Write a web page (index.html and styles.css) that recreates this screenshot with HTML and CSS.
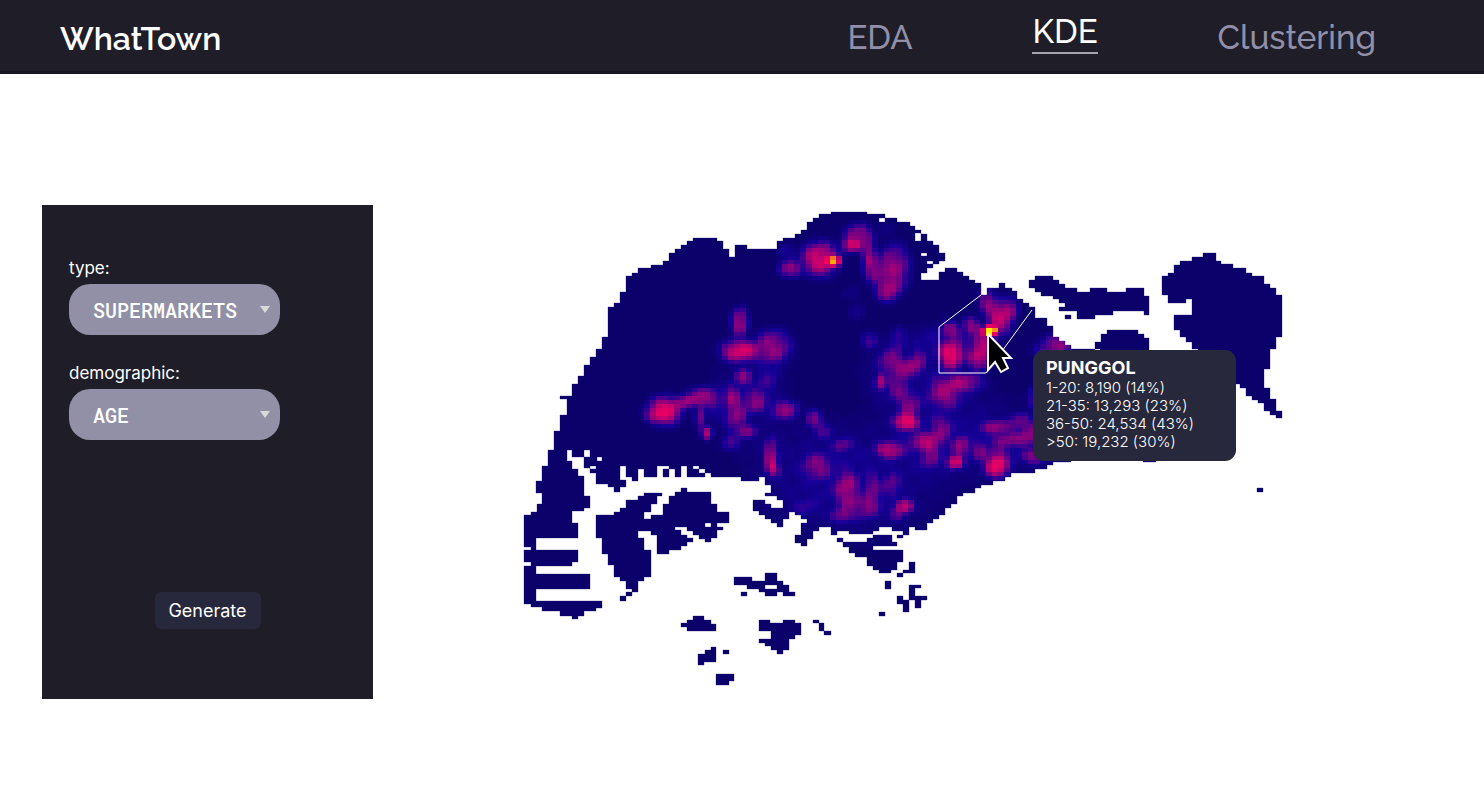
FILE: index.html
```html
<!DOCTYPE html>
<html lang="en">
<head>
<meta charset="utf-8">
<title>WhatTown</title>
<link rel="stylesheet" href="styles.css">
</head>
<body>
<header class="topbar">
  <a class="brand" href="#">WhatTown</a>
  <nav class="nav">
    <a class="nav-link" href="#">EDA</a>
    <a class="nav-link active" href="#" aria-current="page">KDE</a>
    <a class="nav-link" href="#">Clustering</a>
  </nav>
</header>
<main class="page">
  <form class="panel">
    <div class="field">
      <label for="type">type:</label>
      <div class="select-wrap">
        <select id="type"><option>SUPERMARKETS</option></select>
        <svg class="caret" viewBox="0 0 10 7" aria-hidden="true"><path d="M0 0H10L5 7Z"/></svg>
      </div>
    </div>
    <div class="field">
      <label for="demographic">demographic:</label>
      <div class="select-wrap">
        <select id="demographic"><option>AGE</option></select>
        <svg class="caret" viewBox="0 0 10 7" aria-hidden="true"><path d="M0 0H10L5 7Z"/></svg>
      </div>
    </div>
    <button class="generate" type="button">Generate</button>
  </form>
  <figure class="map">
    <svg class="map-svg" viewBox="523 211 760 476" role="img" aria-label="Density map">
      <defs>
        <clipPath id="land-clip"><path id="land" clip-rule="evenodd" fill-rule="evenodd" d="
M560 415H567V399H560V396H572V384H578V376H584V365H590V357H596V349H602V337H608V307H614V303H620V292H626V276H632V273H638V268H651V265H663V261H669V253H675V249H681V245H687V241H693V238H717V241H723V249H729V257H735V245H747V249H777V241H783V238H795V234H801V230H807V222H813V218H819V214H831V212H867V214H885V218H897V222H910V226H915V230H921V234H927V241H933V245H939V253H945V261H939V264H933V268H927V273H921V280H939V272H945V268H957V272H963V276H969V280H975V283H981V295H987V288H999V283H1005V288H1012V291H1017V299H1023V303H1029V307H1035V318H1047V326H1053V337H1059V341H1065V345H1071V349H1100V460H1071V462H1053V465H1047V469H1035V473H1011V477H1005V481H993V485H981V488H975V493H963V496H957V504H951V508H945V515H939V519H933V523H927V530H915V527H909V535H903V538H897V535H903V531H892V527H879V531H873V534H849V531H837V535H831V527H819V531H813V539H807V546H801V543H795V535H801V523H807V519H801V515H795V512H789V519H783V527H777V523H771V519H765V515H759V511H753V500H765V504H771V508H783V500H777V496H765V493H771V485H765V477H759V481H741V477H711V473H705V477H687V466H681V477H675V469H669V477H663V469H669V466H657V477H644V469H638V481H632V477H626V466H620V480H626V487H620V492H614V487H608V484H596V473H590V468H584V457H572V450H567V461H572V469H578V476H584V496H590V508H584V511H572V523H578V538H536V550H578V562H572V566H536V574H590V589H536V601H602V608H596V611H584V616H578V619H572V616H560V611H542V607H531V604H524V566H531V562H524V550H531V547H524V515H531V512H537V504H542V493H536V481H542V466H548V450H554V431H560Z
M584 450H590V457H584ZM597 457H602V461H597ZM590 466H596V469H590ZM693 466H699V469H693ZM699 469H705V473H699ZM879 218H885V222H879ZM915 233H921V241H915ZM921 253H927V256H921ZM927 261H933V264H927Z
M596 515H614V512H620V508H626V500H638V496H644V493H662V496H657V504H651V512H644V519H651V515H663V504H669V496H675V492H681V488H687V492H711V504H717V512H729V523H717V527H723V530H717V538H711V542H705V539H699V535H693V531H687V527H675V530H681V535H687V538H693V542H687V546H681V550H669V554H657V535H651V531H638V538H644V550H651V577H644V581H638V592H632V596H626V601H620V596H626V592H632V589H626V581H620V577H614V565H608V554H602V538H596ZM705 523H711V527H705Z
M734 577H752V581H765V573H777V581H783V585H789V592H795V596H783V592H777V596H765V592H759V589H747V585H734ZM765 585H777V589H765ZM741 592H747V596H741Z
M693 616H704V620H711V624H716V631H687V627H681V623H687V620H693Z
M759 620H770V623H783V620H795V623H801V635H795V639H789V650H783V654H777V650H771V646H765V643H759V639H771V631H759Z
M813 620H819V623H813ZM819 623H824V631H819ZM824 631H831V635H824Z
M711 647H716V662H704V665H698V654H705V650H711ZM723 650H729V654H723Z
M716 674H734V681H729V685H716Z
M837 538H843V542H837ZM843 542H867V538H873V535H892V542H897V546H873V550H903V562H897V570H891V573H879V570H873V566H867V557H855V553H849V547H843Z
M909 562H915V573H903V570H909ZM897 573H903V577H897ZM885 581H891V589H885ZM909 585H921V588H915V596H927V600H921V608H915V600H909ZM897 596H903V600H909V612H903V604H897ZM879 612H885V616H879Z
M1029 280H1035V276H1053V280H1059V284H1065V288H1077V292H1090V288H1107V292H1126V288H1144V296H1149V315H1144V311H1113V315H1095V319H1077V311H1059V307H1065V303H1059V299H1053V296H1041V292H1035V288H1029ZM1065 315H1071V319H1065Z
M1101 351H1095V342H1101V334H1107V330H1138V334H1144V338H1149V351H1156V462H1143V400H1101Z
M1162 276H1168V273H1174V265H1180V261H1192V257H1203V253H1216V261H1221V264H1233V268H1246V273H1252V276H1264V284H1270V288H1276V295H1282V337H1276V349H1270V369H1264V388H1270V399H1276V411H1282V418H1276V415H1270V411H1264V403H1258V400H1252V396H1246V388H1240V384H1230V353H1198V349H1192V342H1186V337H1180V330H1174V315H1192V299H1186V303H1168V295H1162Z
M1257 488H1263V492H1257Z"/></clipPath>
      </defs>
      <use class="land" href="#land"/>
      <g id="heat" clip-path="url(#land-clip)" shape-rendering="crispEdges"></g>
      <path class="area" d="M981 295L939 327V373H986L1032 310"/>
      <path class="pointer" d="M988 334V370L995 362L1001 372L1008 368L1003 358H1011Z"/>
    </svg>
    <figcaption class="tooltip">
      <strong class="tooltip-title">PUNGGOL</strong>
      <span>1-20: 8,190 (14%)</span>
      <span>21-35: 13,293 (23%)</span>
      <span>36-50: 24,534 (43%)</span>
      <span>&gt;50: 19,232 (30%)</span>
    </figcaption>
  </figure>
</main>
<script src="heat.js"></script>
</body>
</html>
```
FILE: styles.css
```css
* { box-sizing: border-box; }

body {
  margin: 0;
  background: #fff;
  font-family: Inter, "Liberation Sans", sans-serif;
}

.topbar {
  display: flex;
  justify-content: space-between;
  height: 74px;
  padding: 0 108px 0 60px;
  background: #1e1d28;
  border-bottom: 3px solid #191822;
}

.brand,
.nav-link {
  font-family: Raleway, Lato, sans-serif;
  font-size: 32px;
  font-weight: 500;
  line-height: 40px;
  text-decoration: none;
  color: #9190a8;
}

.brand { padding-top: 19px; color: #fff; font-weight: 600; }

.nav {
  display: flex;
  align-items: flex-start;
  gap: 120px;
}

.nav-link {
  margin-top: 18px;
  font-size: 33px;
}

.nav-link.active {
  margin-top: 12px;
  color: #fff;
  border-bottom: 2px solid #a5a5ad;
}

.page {
  display: flex;
  align-items: flex-start;
  gap: 150px;
  padding: 131px 201px 0 42px;
}

.panel {
  display: flex;
  flex: none;
  flex-direction: column;
  width: 331px;
  min-height: 494px;
  padding: 51px 27px 70px;
  background: #1e1d28;
  color: #fff;
  font-size: 17px;
}

.field {
  display: flex;
  flex-direction: column;
  gap: 3px;
  margin-bottom: 26px;
  font-weight: 400;
  line-height: 25px;
}

.select-wrap {
  display: grid;
  align-items: center;
  width: 211px;
}

.select-wrap select {
  grid-area: 1 / 1;
  appearance: none;
  width: 100%;
  height: 51px;
  padding: 0 24px;
  border: 0;
  border-radius: 21px;
  background: #9190a6;
  color: #fff;
  font-family: "Roboto Mono", "DejaVu Sans Mono", monospace;
  font-size: 20px;
  font-weight: 500;
}

.caret {
  grid-area: 1 / 1;
  justify-self: end;
  width: 10px;
  height: 7px;
  margin-right: 10px;
  fill: #d9d9d9;
  pointer-events: none;
}

.generate {
  align-self: center;
  width: 106px;
  height: 37px;
  margin-top: auto;
  padding: 0;
  border: 0;
  border-radius: 6px;
  background: #28283c;
  color: #fff;
  font-family: inherit;
  font-size: 18px;
}

.map {
  position: relative;
  flex: 1;
  margin: 0;
}

.map-svg {
  display: block;
  width: 100%;
  margin-top: 6px;
}

.land {
  fill: #0c006b;
  stroke: #0c006b;
  stroke-opacity: 0.3;
}

.area {
  fill: none;
  stroke: #fff;
}

.pointer {
  fill: #000;
  stroke: #fff;
  stroke-width: 2;
}

.tooltip {
  position: absolute;
  left: 67.1%;
  top: 30%;
  display: flex;
  flex-direction: column;
  width: 203px;
  padding: 7px 13px 10px;
  border-radius: 11px;
  background: #28283c;
  color: #fff;
  font-size: 15px;
  font-weight: 300;
  line-height: 18px;
  white-space: nowrap;
}

.tooltip-title {
  font-size: 18px;
  font-weight: 700;
  line-height: 22px;
}
```
FILE: heat.js
```js
// Density hotspots: x, y, horizontal radius, vertical radius, strength
const spots = [
  [820,259,13,12,.66],[834,261,5,4,.75],[790,269,8,6,.45],[787,252,7,6,.13],
  [859,237,10,9,.5],[850,246,7,5,.4],[869,254,5,7,.45],[873,270,7,9,.4],[894,268,11,16,.48],[887,291,9,8,.4],
  [886,228,7,5,.06],[852,293,7,6,.06],[857,312,6,6,.1],
  [987,301,6,11,.35],[1001,317,9,12,.62],[990,331,5,4,1.2],[984,345,9,12,.45],[971,325,6,6,.4],[951,330,7,6,.35],
  [951,355,9,10,.6],[978,361,8,7,.35],[1013,307,5,8,.2],[967,345,16,13,.15],
  [773,347,13,12,.45],[740,322,6,10,.5],[740,351,13,8,.65],[744,377,6,6,.38],
  [665,411,12,10,.72],[652,415,6,5,.15],[702,397,12,7,.42],[686,402,9,5,.28],[701,417,4,9,.35],[707,433,4,5,.5],
  [732,393,5,8,.28],[736,413,8,14,.36],[756,402,8,8,.34],[747,432,7,5,.3],[731,443,7,6,.2],[716,404,7,12,.12],
  [763,388,9,8,.12],[770,375,8,8,.12],[785,410,10,7,.4],[814,419,6,7,.32],[823,431,7,6,.18],
  [771,456,5,12,.45],[774,470,5,5,.3],[817,466,10,9,.3],[843,445,7,5,.24],
  [847,489,8,12,.38],[862,508,13,8,.28],[873,491,6,12,.27],[892,485,6,9,.24],[905,506,6,5,.6],[896,514,6,5,.24],
  [841,516,7,5,.3],[805,507,9,6,.12],[890,450,10,6,.48],[906,422,9,6,.65],[910,405,8,9,.34],[927,441,13,7,.4],
  [942,427,8,8,.26],[930,457,7,9,.26],[955,462,6,5,.6],[961,446,6,8,.36],[997,467,9,8,.66],[999,454,6,6,.22],
  [980,452,7,7,.24],[998,427,13,5,.34],[1022,420,7,5,.34],[1015,440,16,5,.28],[1031,432,6,6,.32],[1033,457,8,5,.3],
  [1034,398,5,8,.25],[1057,345,11,7,.45],[1040,352,7,5,.15],
  [870,340,6,6,.24],[899,340,5,9,.22],[890,360,7,9,.28],[906,368,9,8,.34],[918,362,6,9,.3],[881,382,4,6,.4],
  [899,387,7,9,.26],[967,382,12,7,.4],[945,392,12,11,.38],[927,340,14,10,.1],[889,376,12,20,.08],
  [811,475,42,36,.09],[875,482,46,40,.09],[955,434,46,34,.11],[895,375,26,28,.06],[1030,445,34,16,.12],
  [750,400,28,36,.07],[943,365,14,32,.08]
];

const scale = [
  [0, 12, 0, 107], [.16, 22, 0, 153], [.28, 70, 0, 142], [.46, 135, 0, 126],
  [.72, 224, 0, 101], [.92, 255, 0, 90], [1.08, 255, 130, 25], [1.3, 255, 235, 0]
];

function colour(v) {
  let i = 1;
  while (i < scale.length - 1 && v > scale[i][0]) i++;
  const a = scale[i - 1];
  const b = scale[i];
  const t = Math.min(1, (v - a[0]) / (b[0] - a[0]));
  return "rgb(" + [1, 2, 3].map(k => Math.round(a[k] + (b[k] - a[k]) * t)).join(",") + ")";
}

const heat = document.getElementById("heat");
const cellWidth = 6;
const cellHeight = 4;

for (let y = 212; y < 600; y += cellHeight) {
  for (let x = 524; x < 1090; x += cellWidth) {
    let v = 0;
    for (const [sx, sy, rx, ry, power] of spots) {
      const d = ((x + 3 - sx) / rx) ** 2 + ((y + 2 - sy) / ry) ** 2;
      v += power * Math.exp(-0.38 * d * Math.sqrt(d + 0.1));
    }
    const wave = Math.sin(x * 0.21 + y * 0.07) * Math.sin(y * 0.23 - x * 0.05);
    v *= 1 + 0.3 * wave * Math.max(0, 1 - v);
    if (v < 0.015) continue;
    const cell = document.createElementNS("http://www.w3.org/2000/svg", "rect");
    cell.setAttribute("x", x);
    cell.setAttribute("y", y);
    cell.setAttribute("width", cellWidth);
    cell.setAttribute("height", cellHeight);
    cell.setAttribute("fill", colour(v));
    heat.appendChild(cell);
  }
}
```
